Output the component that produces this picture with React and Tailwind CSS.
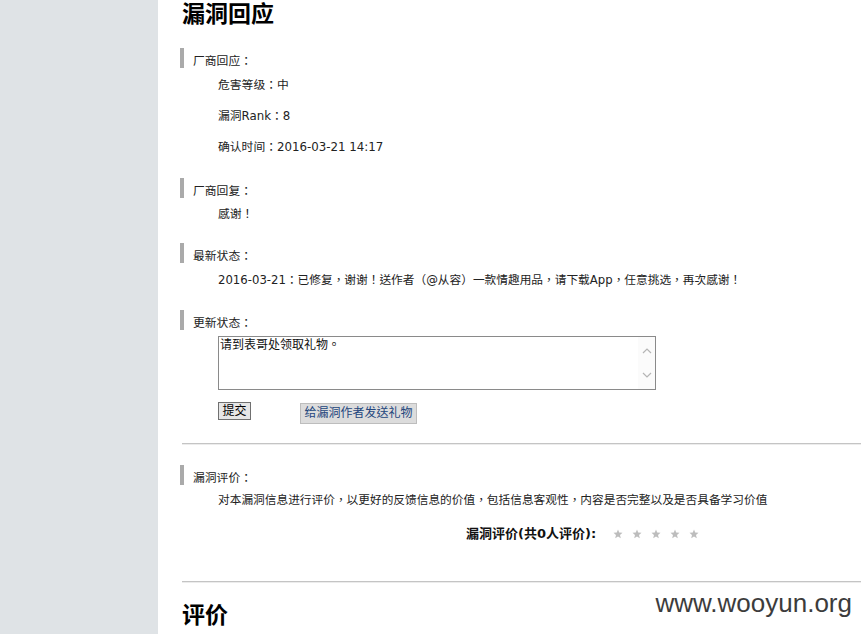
import React from "react";

const font = { fontFamily: '"DejaVu Sans", "Noto Sans CJK TC", sans-serif' };

function Label({ children, className = "" }) {
  return (
    <div className={"flex items-start h-[20px] " + className}>
      <div className="w-[4px] h-[20px] bg-[#aaaaaa] shrink-0" />
      <span className="ml-[9px] mt-[3px] leading-[20px] text-[11.8px] text-[#222]">{children}</span>
    </div>
  );
}

function Star() {
  return (
    <svg width="10" height="10" viewBox="0 0 10 10">
      <polygon
        points="5,0.5 6.2,3.6 9.5,3.8 7,5.9 7.8,9.3 5,7.5 2.2,9.3 3,5.9 0.5,3.8 3.8,3.6"
        fill="#bdbdbd"
      />
    </svg>
  );
}

export default function App() {
  return (
    <div className="relative flex w-[861px] h-[634px] overflow-hidden bg-white text-[#222]" style={font}>
      <div className="w-[158px] shrink-0 bg-[#dfe3e6]" />
      <div className="flex-1 pl-[22px] flex flex-col">
        <h1 className="pl-[2px] h-[26px] leading-[24px] text-[23px] font-bold text-black" style={{ fontFamily: '"Noto Sans CJK SC", sans-serif' }}>
          漏洞回应
        </h1>

        <Label className="mt-[22px]">厂商回应：</Label>
        <div className="pl-[38px] mt-[2px] text-[11.8px]">
          <div className="h-[31px] leading-[31px]">危害等级：中</div>
          <div className="h-[31px] leading-[31px]">漏洞Rank：8</div>
          <div className="h-[31px] leading-[31px]">确认时间：2016-03-21 14:17</div>
        </div>

        <Label className="mt-[15px]">厂商回复：</Label>
        <div className="pl-[38px] text-[11.8px] h-[32px] leading-[32px]">感谢！</div>

        <Label className="mt-[13px]">最新状态：</Label>
        <div className="pl-[38px] text-[11.7px] h-[34px] leading-[34px] whitespace-nowrap">
          2016-03-21：已修复，谢谢！送作者（@从容）一款情趣用品，请下载App，任意挑选，再次感谢！
        </div>

        <Label className="mt-[13px]">更新状态：</Label>
        <div className="pl-[38px] mt-[6px]">
          <div className="relative w-[438px] h-[54px] border border-[#8a8a8a] bg-white">
            <div className="pl-[1px] pt-[1px] text-[12px] leading-[14px] text-[#111]">请到表哥处领取礼物。</div>
            <div className="absolute right-0 top-0 bottom-0 w-[17px] bg-[#fbfbfb] flex flex-col items-center justify-between py-[10px]">
              <svg width="10" height="7" viewBox="0 0 10 7">
                <polyline points="1,6 5,2 9,6" fill="none" stroke="#b5b5b5" strokeWidth="1.2" />
              </svg>
              <svg width="10" height="7" viewBox="0 0 10 7">
                <polyline points="1,1 5,5 9,1" fill="none" stroke="#b5b5b5" strokeWidth="1.2" />
              </svg>
            </div>
          </div>
        </div>

        <div className="pl-[38px] mt-[12px] flex items-start">
          <button className="w-[33px] h-[18px] border border-[#707070] bg-[#e6e6e6] text-[12px] leading-[14px] text-black">
            提交
          </button>
          <button className="ml-[49px] mt-[1px] w-[117px] h-[21px] border border-[#bdbdbd] bg-[#dcdcdc] text-[12px] leading-[19px] text-[#24467c]">
            给漏洞作者发送礼物
          </button>
        </div>

        <div className="ml-[2px] mt-[19px] h-[2px] border-t border-[#c4c4c4] border-b border-b-[#ececec]" />

        <Label className="mt-[20px]">漏洞评价：</Label>
        <div className="pl-[38px] text-[11.7px] h-[30px] leading-[30px] whitespace-nowrap">
          对本漏洞信息进行评价，以更好的反馈信息的价值，包括信息客观性，内容是否完整以及是否具备学习价值
        </div>
        <div className="h-[38px] flex items-center pl-[286px]">
          <span className="text-[13px] font-bold text-[#111]">漏洞评价(共0人评价):</span>
          <div className="ml-[17px] flex gap-[9px]">
            <Star />
            <Star />
            <Star />
            <Star />
            <Star />
          </div>
        </div>

        <div className="ml-[2px] mt-[28px] h-[2px] border-t border-[#c4c4c4] border-b border-b-[#ececec]" />

        <h2 className="pl-[2px] mt-[15px] h-[30px] leading-[30px] text-[23px] font-bold text-black" style={{ fontFamily: '"Noto Sans CJK SC", sans-serif' }}>
          评价
        </h2>
      </div>

      <div
        className="absolute right-[9px] top-[590px] text-[26px] leading-[26px] text-[#3c3c3c]"
        style={{ fontFamily: '"Liberation Sans", Arial, sans-serif' }}
      >
        www.wooyun.org
      </div>
    </div>
  );
}
